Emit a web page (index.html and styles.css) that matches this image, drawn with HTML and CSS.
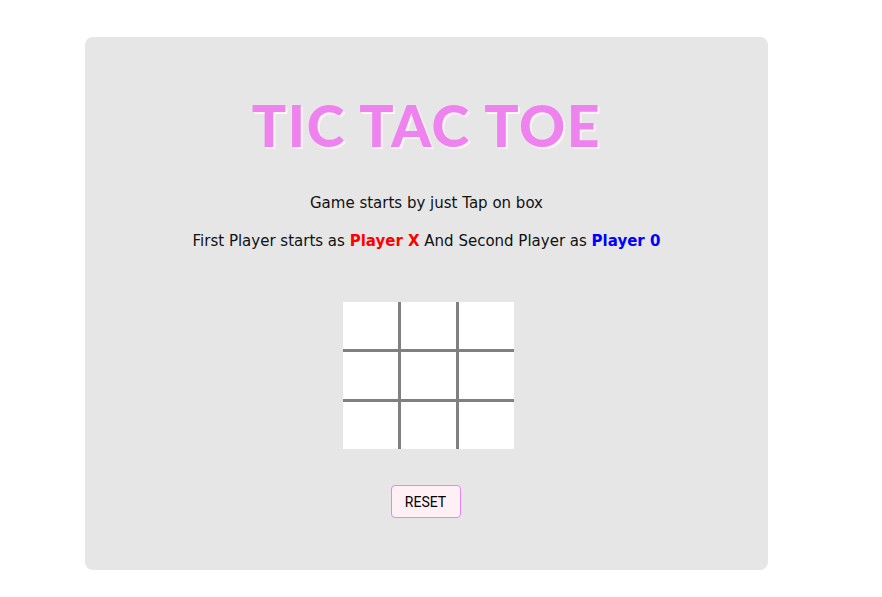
FILE: index.html
```html
<!DOCTYPE html>
<html>
<head>
<meta charset="utf-8">
<link rel="stylesheet" href="styles.css">
</head>
<body>
<div class="card">
  <h1 class="title">TIC TAC TOE</h1>
  <p class="info">Game starts by just Tap on box</p>
  <p class="info">First Player starts as <b class="px">Player X</b> And Second Player as <b class="po">Player 0</b></p>
  <div class="board">
    <div class="cell"></div><div class="cell"></div><div class="cell"></div>
    <div class="cell"></div><div class="cell"></div><div class="cell"></div>
    <div class="cell"></div><div class="cell"></div><div class="cell"></div>
  </div>
  <button class="reset">RESET</button>
</div>
</body>
</html>
```
FILE: styles.css
```css
html, body { margin: 0; padding: 0; background: #fff; }
body { padding: 37px 0 0 85px; }
.card {
  width: 683px;
  height: 533px;
  background: #e6e6e6;
  border-radius: 8px;
  display: flex;
  flex-direction: column;
  align-items: center;
  box-sizing: border-box;
  padding-top: 56px;
}
.title {
  margin: 0;
  font-family: "Lato", sans-serif;
  font-weight: 900;
  font-size: 57px;
  line-height: 64px;
  color: #ee82ee;
  text-shadow: 2px 2px 0 #fff5f8;
  letter-spacing: 1.6px;
}
.info {
  margin: 0;
  font-family: "DejaVu Sans", sans-serif;
  font-size: 15px;
  color: #111;
  line-height: 20px;
}
.title + .info { margin-top: 36px; }
.info + .info { margin-top: 18px; }
.px { color: #ff0000; }
.po { color: #0000ff; }
.board {
  margin: 51px 0 0 4px;
  display: grid;
  grid-template-columns: repeat(3, 55px);
  grid-template-rows: repeat(3, 47px);
  gap: 3px;
  background: #808080;
}
.cell { background: #fff; }
.reset {
  margin: 36px 0 0 -2px;
  width: 70px;
  height: 33px;
  background: #fff0f5;
  border: 1px solid #ee82ee;
  border-radius: 4px;
  font-family: "Roboto", sans-serif;
  font-size: 14px;
  color: #000;
  padding: 0;
}
```
